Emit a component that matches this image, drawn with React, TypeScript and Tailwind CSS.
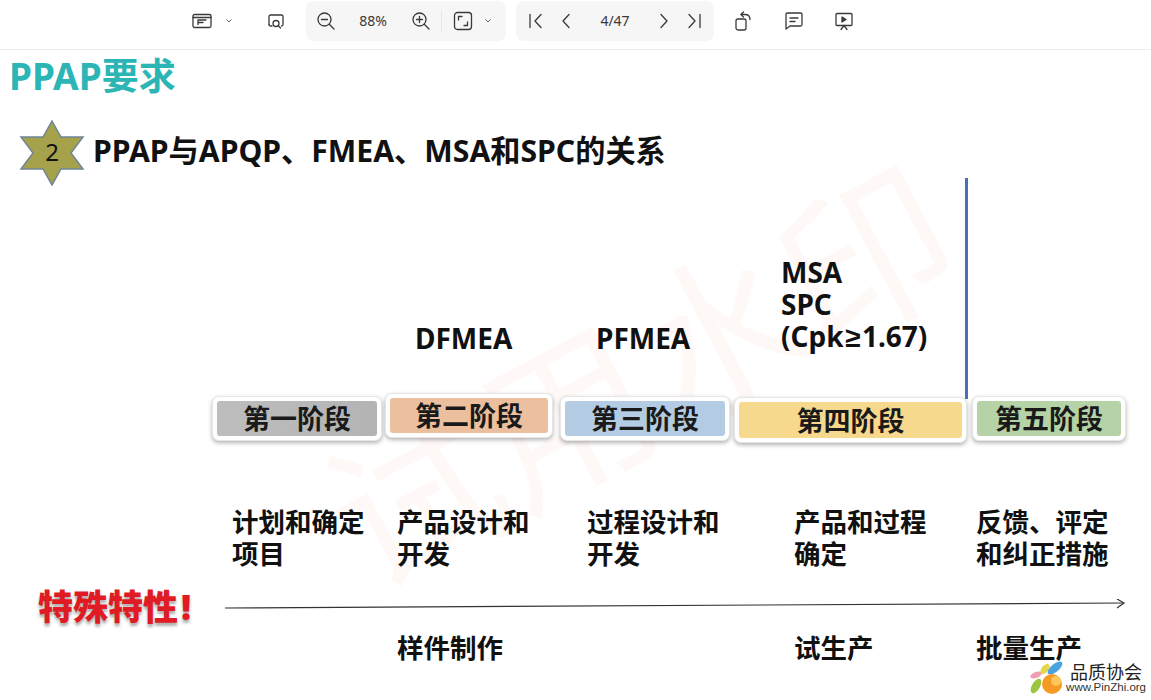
import React from 'react';

const cjk = "font-['Noto_Sans','Noto_Sans_CJK_SC',sans-serif]";

const stages = [
  { name: '第一阶段', box: 'w-[170px] h-[45px] mt-[3px]', fill: 'bg-gradient-to-r from-[#bdbdbd] to-[#b4b4b4]' },
  { name: '第二阶段', box: 'w-[168px] h-[45px]', fill: 'bg-[#ecbf9f]' },
  { name: '第三阶段', box: 'w-[170px] h-[45px] mt-[3px]', fill: 'bg-[#b4cce3]' },
  { name: '第四阶段', box: 'w-[233px] h-[46px] mt-[4px]', fill: 'bg-[#f7d98d]' },
  { name: '第五阶段', box: 'w-[154px] h-[45px] mt-[3px]', fill: 'bg-[#b5d3a6]' },
];

const Chevron = () => (
  <svg width="8" height="6" viewBox="0 0 8 6" fill="none" stroke="#666" strokeWidth="1">
    <path d="M1.5 1.5 4 4l2.5-2.5" />
  </svg>
);

const Icon = ({ children, size = 20 }: { children: React.ReactNode; size?: number }) => (
  <svg width={size} height={size} viewBox="0 0 20 20" fill="none" stroke="#3a3a3a" strokeWidth="1.3" strokeLinecap="round" strokeLinejoin="round">
    {children}
  </svg>
);

function Toolbar() {
  return (
    <div className={`h-[50px] border-b border-[#ececec] bg-white flex items-center pl-[192px] pb-[8px] text-[14px] font-normal text-[#3a3a3a] ${cjk}`}>
      <Icon>
        <rect x="1" y="3.500" width="18" height="13" rx="1.500" />
        <path d="M1 6.500h18" />
        <path d="M6 9h8M6 9v4.500M6 11.500h5" />
      </Icon>
      <span className="ml-[13px]"><Chevron /></span>

      <span className="ml-[33px]">
        <Icon>
          <path d="M3 13.500v-8A1.500 1.500 0 0 1 4.500 4h11A1.500 1.500 0 0 1 17 5.500v8c0 .8-.5 1.500-1.500 1.500" />
          <path d="M3 13.500c0 .8.5 1.500 1.500 1.500H6" />
          <circle cx="10" cy="12.500" r="3" />
          <path d="m12.300 14.800 2.200 2.200" />
        </Icon>
      </span>

      <div className="ml-[20px] w-[200px] h-[40px] rounded-[8px] bg-[#f6f6f6] flex items-center pl-[10px]">
        <Icon>
          <circle cx="8.500" cy="8.500" r="6.500" />
          <path d="M5.500 8.500h6M13.300 13.300 18 18" />
        </Icon>
        <span className="w-[54px] ml-[10px] text-center">88%</span>
        <span className="ml-[11px]">
          <Icon>
            <circle cx="8.500" cy="8.500" r="6.500" />
            <path d="M5.500 8.500h6M8.500 5.500v6M13.300 13.300 18 18" />
          </Icon>
        </span>
        <span className="ml-[10px] w-px h-[22px] bg-[#e8e8e8]" />
        <span className="ml-[11px]">
          <Icon>
            <rect x="1.500" y="1.500" width="17" height="17" rx="3" />
            <path d="M5.500 9V5.500H9M14.500 11v3.500H11" />
          </Icon>
        </span>
        <span className="ml-[11px]"><Chevron /></span>
      </div>

      <div className="ml-[10px] w-[198px] h-[40px] rounded-[8px] bg-[#f6f6f6] flex items-center pl-[10px]">
        <Icon>
          <path d="M4 3.500v13M15 3.500 9 10l6 6.500" />
        </Icon>
        <span className="ml-[10px]">
          <Icon>
            <path d="M13 3.500 7 10l6 6.500" />
          </Icon>
        </span>
        <span className="w-[58px] ml-[10px] text-center">4/47</span>
        <span className="ml-[10px]">
          <Icon>
            <path d="m7 3.500 6 6.500-6 6.500" />
          </Icon>
        </span>
        <span className="ml-[10px]">
          <Icon>
            <path d="m5 3.500 6 6.500-6 6.500M16 3.500v13" />
          </Icon>
        </span>
      </div>

      <span className="ml-[20px]">
        <Icon>
          <rect x="2" y="8" width="10" height="11" rx="2" />
          <path d="M9.500 1 7 3.500 9.500 6" />
          <path d="M7 3.500h4c3 0 5 2 5 5" />
        </Icon>
      </span>
      <span className="ml-[30px]">
        <Icon>
          <path d="M2 3.500A1.500 1.500 0 0 1 3.500 2h13A1.500 1.500 0 0 1 18 3.500v10a1.500 1.500 0 0 1-1.500 1.500H6l-4 3z" />
          <path d="M6 7h8M6 10.500h5" />
        </Icon>
      </span>
      <span className="ml-[30px]">
        <Icon>
          <rect x="2" y="2.500" width="16" height="12" rx="1" />
          <path d="M8 6v5l4-2.500z" fill="#3a3a3a" />
          <path d="M10 14.500 7 18.500M10 14.500l3 4" />
        </Icon>
      </span>
    </div>
  );
}

function Logo() {
  return (
    <div className="absolute right-[5px] bottom-[5px] flex items-center font-normal">
      <svg width="36" height="34" viewBox="0 0 36 34">
        <ellipse cx="7" cy="14" rx="6" ry="3" transform="rotate(-20 7 14)" fill="#ee9fb4" />
        <ellipse cx="16" cy="8" rx="6" ry="3.500" transform="rotate(-50 16 8)" fill="#e3d64a" />
        <ellipse cx="26" cy="7" rx="9" ry="4" transform="rotate(-40 26 7)" fill="#4aa3e0" />
        <ellipse cx="7" cy="25" rx="8" ry="4" transform="rotate(-60 7 25)" fill="#9ac53c" />
        <circle cx="23" cy="23" r="10" fill="#f59a23" />
        <circle cx="27" cy="20" r="5" fill="#fbc75d" />
      </svg>
      <div className="ml-px flex flex-col items-center leading-none">
        <span className="text-[18px] text-[#222] font-['Noto_Sans_CJK_SC',sans-serif]">品质协会</span>
        <span className="text-[11.500px] text-[#333] font-['Liberation_Sans',sans-serif] mt-[2px]">www.PinZhi.org</span>
      </div>
    </div>
  );
}

export default function App() {
  return (
    <div className={`relative w-[1151px] h-[700px] overflow-hidden bg-white text-[#111] font-bold ${cjk}`}>
      <Toolbar />

      {/* faint watermark behind the slide */}
      <div className="absolute left-[300px] top-[290px] -rotate-[28deg] text-[170px] leading-none font-normal text-[#fef8f6] whitespace-nowrap">
        试用水印
      </div>

      <div className="relative">
        <h1 className="ml-[9px] mt-[2px] h-[48px] text-[37px] leading-[48px] font-bold text-[#2cb5b5]">PPAP要求</h1>

        <div className="flex items-center ml-[19px] mt-[20px] h-[66px]">
          <svg width="66" height="66" viewBox="0 0 66 66">
            <polygon
              points="33,1 42,17 64,17 52,33 64,49 42,49 33,65 24,49 2,49 14,33 2,17 24,17"
              fill="#a6a24c"
              stroke="#6f8596"
              strokeWidth="1.500"
            />
            <text x="33" y="41" textAnchor="middle" fontSize="24" fontWeight="400" fill="#111">2</text>
          </svg>
          <h2 className="ml-[8px] mb-[4px] text-[30.200px] leading-none font-bold whitespace-nowrap">PPAP与APQP、FMEA、MSA和SPC的关系</h2>
        </div>

        {/* tool names over the phases */}
        <div className="ml-[212px] mt-[70px] grid grid-cols-[173px_175px_174px_238px_154px] items-end text-[28px] leading-[32px]">
          <div />
          <div className="pl-[30px]">DFMEA</div>
          <div className="pl-[36px]">PFMEA</div>
          <div className="pl-[47px] whitespace-nowrap">
            MSA<br />SPC<br />(Cpk<span className="px-[1.500px] font-['Liberation_Sans',sans-serif]">≥</span>1.67)
          </div>
          <div />
        </div>

        {/* phases */}
        <div className="ml-[212px] mt-[39px] grid grid-cols-[173px_175px_174px_238px_154px] items-start">
          {stages.map((s) => (
            <div key={s.name} className={`${s.box} p-[4px] rounded-[7px] bg-white border border-[#e6e6e6] shadow-[0_2px_4px_rgba(0,0,0,0.3)]`}>
              <div className={`${s.fill} h-full rounded-[3px] flex items-center justify-center text-[27px] leading-none text-[#1a1a1a]`}>
                {s.name}
              </div>
            </div>
          ))}
        </div>

        <div className="ml-[212px] mt-[63px] grid grid-cols-[173px_175px_174px_238px_154px] text-[26.500px] leading-[32px] whitespace-nowrap">
          <div className="pl-[20px]">计划和确定<br />项目</div>
          <div className="pl-[12px]">产品设计和<br />开发</div>
          <div className="pl-[27px]">过程设计和<br />开发</div>
          <div className="pl-[60px]">产品和过程<br />确定</div>
          <div className="pl-[4px]">反馈、评定<br />和纠正措施</div>
        </div>

        <div className="flex items-center h-[50px] mt-[11px]">
          <div className="ml-[38px] w-[187px] text-[35px] leading-none font-black text-[#e01b24] whitespace-nowrap [text-shadow:0_3px_3px_rgba(90,90,90,0.5)]">
            特殊特性<span className="ml-[3px]">!</span>
          </div>
          <svg width="902" height="14" viewBox="0 0 902 14" fill="none" stroke="#333" strokeWidth="1.200">
            <path d="M0 9 899 4" />
            <path d="m892 0 7 4-7 5" />
          </svg>
        </div>

        <div className="ml-[212px] mt-px grid grid-cols-[173px_175px_174px_238px_154px] text-[26.500px] leading-[32px]">
          <div />
          <div className="pl-[12px]">样件制作</div>
          <div />
          <div className="pl-[60px]">试生产</div>
          <div className="pl-[4px]">批量生产</div>
        </div>
      </div>

      {/* vertical divider of the slide */}
      <div className="absolute left-[965px] top-[178px] w-[3px] h-[221px] bg-[#4a70b4]" />
      <Logo />
    </div>
  );
}
